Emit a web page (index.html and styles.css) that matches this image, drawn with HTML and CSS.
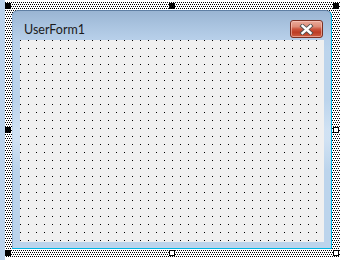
FILE: index.html
```html
<!DOCTYPE html>
<html>
<head>
<meta charset="utf-8">
<link rel="stylesheet" href="styles.css">
</head>
<body>
<div class="strip"></div>
<div class="canvas">
  <div class="sel">
    <div class="window">
      <div class="titlebar">
        <span class="title">UserForm1</span>
        <div class="close">
          <svg width="15" height="11" viewBox="0 0 15 11">
            <path d="M3.5 2 L11.5 9 M11.5 2 L3.5 9" stroke="#505050" stroke-width="4.2" stroke-linecap="square" fill="none"/>
            <path d="M3.5 2 L11.5 9 M11.5 2 L3.5 9" stroke="#ffffff" stroke-width="2.4" stroke-linecap="square" fill="none"/>
          </svg>
        </div>
      </div>
      <div class="body">
        <div class="client"></div>
      </div>
    </div>
    <span class="handle fixed tl"></span>
    <span class="handle fixed tm"></span>
    <span class="handle fixed tr"></span>
    <span class="handle fixed ml"></span>
    <span class="handle mr"></span>
    <span class="handle fixed bl"></span>
    <span class="handle bm"></span>
    <span class="handle br"></span>
  </div>
</div>
</body>
</html>
```
FILE: styles.css
```css
html, body {
  margin: 0;
  padding: 0;
}
body {
  width: 348px;
  height: 260px;
  background: #ffffff;
  display: flex;
  overflow: hidden;
  font-family: "Lato", "Noto Sans", sans-serif;
}
.strip {
  width: 5px;
  height: 260px;
  background: #b9d1ea;
  flex: none;
}
.canvas {
  flex: 1;
  padding-top: 2px;
}
.sel {
  position: relative;
  width: 335px;
  height: 256px;
  box-sizing: border-box;
  padding: 8px 8px 9px 7px;
  background:
    conic-gradient(at 1px 1px, transparent 75%, #000 0) 0 0 / 2px 4px,
    conic-gradient(at 1px 1px, transparent 75%, #000 0) 1px 2px / 2px 4px,
    #ffffff;
}
.window {
  height: 100%;
  box-sizing: border-box;
  display: flex;
  flex-direction: column;
  border-radius: 6px 6px 0 0;
  border-top: 1px solid #5e7ea3;
  border-bottom: 1px solid #00b6e4;
  border-right: 1px solid #00b6e4;
  background:
    linear-gradient(to bottom, #9ab5d3 0px, #a9c3df 14px, #b8d0ea 29px, #bcd4ec 40px, #bcd4ec 100%);
  box-shadow: inset 1px 0 0 #8fb0d4;
}
.titlebar {
  height: 29px;
  display: flex;
  justify-content: space-between;
  align-items: flex-start;
  padding: 0 8px 0 12px;
  flex: none;
}
.title {
  margin-top: 11px;
  font-size: 12.5px;
  line-height: 16px;
  color: #1b1b1b;
}
.close {
  margin-top: 9px;
  width: 33px;
  height: 18px;
  box-sizing: border-box;
  border: 1px solid #7a3023;
  border-radius: 3px;
  background: linear-gradient(to bottom, #eaaa9a 0%, #de8c78 35%, #cc563f 50%, #bd3c24 70%, #cd5e42 100%);
  box-shadow: inset 0 0 0 1px rgba(255, 210, 200, 0.55);
  display: flex;
  align-items: center;
  justify-content: center;
}
.close svg {
  display: block;
}
.body {
  flex: 1;
  display: flex;
  padding: 0 7px 6px 8px;
  background: linear-gradient(to bottom, transparent 0, transparent 60px, rgba(225, 237, 249, 0.55) 90px, rgba(225, 237, 249, 0.55) 100px, transparent 130px);
}
.client {
  flex: 1;
  background: conic-gradient(at 1px 1px, #f0f0f0 75%, #000 0) 0 0 / 8px 8px;
  background-color: #f0f0f0;
}
.handle {
  position: absolute;
  width: 6px;
  height: 6px;
  box-sizing: border-box;
  background: #fff;
  border: 1px solid #000;
}
.handle.fixed {
  background: #000;
}
.tl { left: 0; top: 1px; }
.tm { left: 164px; top: 1px; }
.tr { left: 328px; top: 1px; }
.ml { left: 0; top: 125px; }
.mr { left: 328px; top: 125px; }
.bl { left: 0; top: 248px; }
.bm { left: 164px; top: 248px; }
.br { left: 328px; top: 248px; }
```
